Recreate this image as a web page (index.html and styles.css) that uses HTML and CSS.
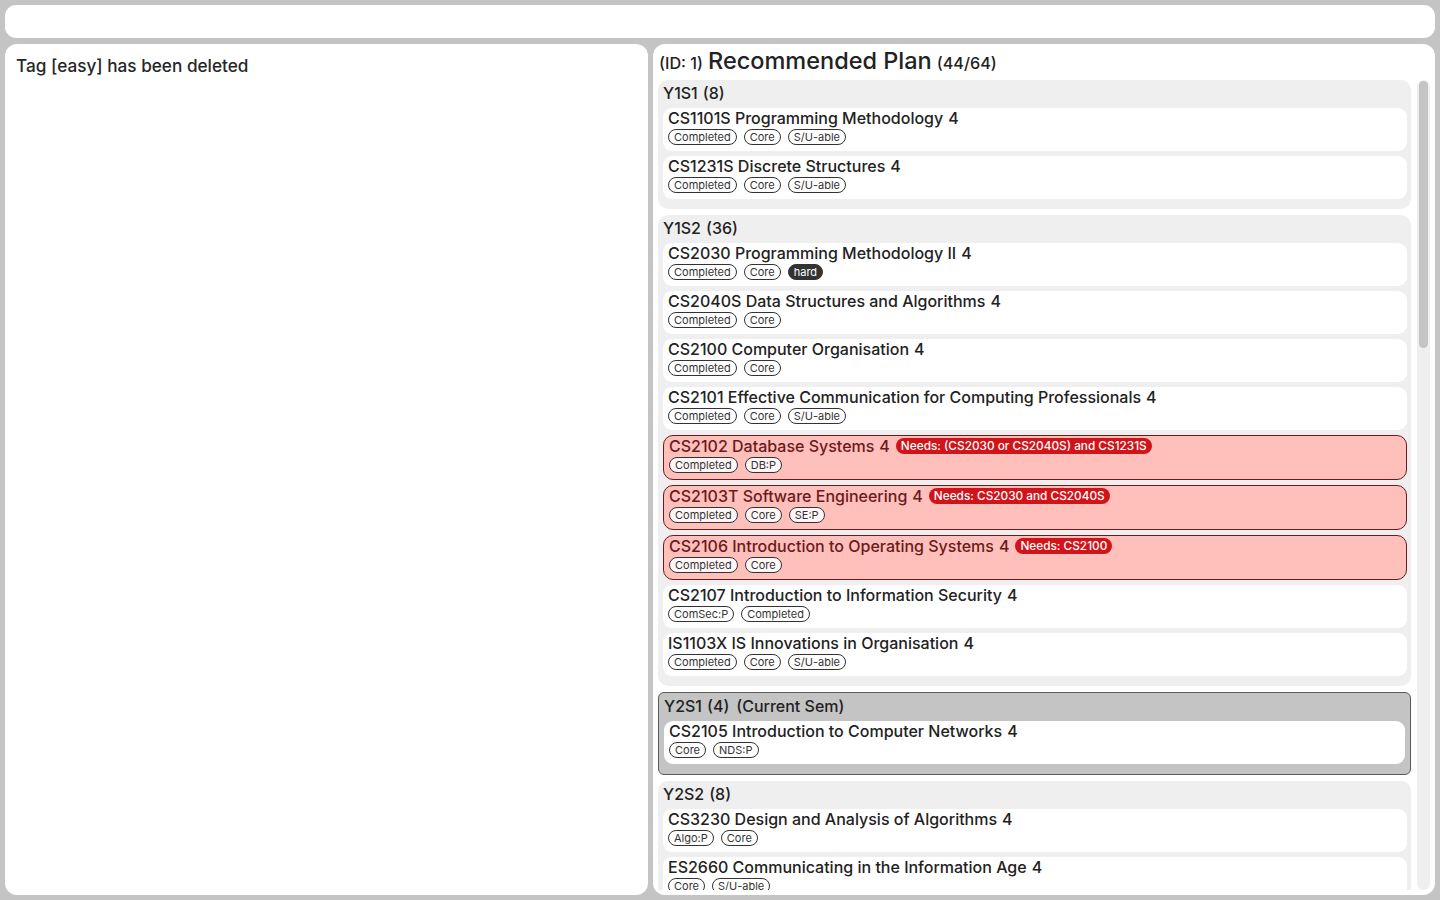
FILE: index.html
```html
<!DOCTYPE html>
<html lang="en">
<head>
<meta charset="utf-8">
<title>Plan</title>
<link rel="stylesheet" href="styles.css">
</head>
<body>
<div class="topbar"></div>
<div class="main">
  <section class="panel left">
    <p class="message">Tag [easy] has been deleted</p>
  </section>
  <section class="panel right">
    <header class="plan-head">
      <span class="small">(ID: 1)</span>
      <span class="big">Recommended Plan</span>
      <span class="small">(44/64)</span>
    </header>
    <div class="scroller">
      <div class="list">
        <div class="sem">
          <div class="sem-head"><span>Y1S1</span><span>(8)</span></div>
          <div class="mod">
            <div class="mod-title"><span>CS1101S Programming Methodology</span><span class="cr">4</span></div>
            <div class="tags"><span class="tag">Completed</span><span class="tag">Core</span><span class="tag">S/U-able</span></div>
          </div>
          <div class="mod">
            <div class="mod-title"><span>CS1231S Discrete Structures</span><span class="cr">4</span></div>
            <div class="tags"><span class="tag">Completed</span><span class="tag">Core</span><span class="tag">S/U-able</span></div>
          </div>
        </div>

        <div class="sem">
          <div class="sem-head"><span>Y1S2</span><span>(36)</span></div>
          <div class="mod">
            <div class="mod-title"><span>CS2030 Programming Methodology II</span><span class="cr">4</span></div>
            <div class="tags"><span class="tag">Completed</span><span class="tag">Core</span><span class="tag filled">hard</span></div>
          </div>
          <div class="mod">
            <div class="mod-title"><span>CS2040S Data Structures and Algorithms</span><span class="cr">4</span></div>
            <div class="tags"><span class="tag">Completed</span><span class="tag">Core</span></div>
          </div>
          <div class="mod">
            <div class="mod-title"><span>CS2100 Computer Organisation</span><span class="cr">4</span></div>
            <div class="tags"><span class="tag">Completed</span><span class="tag">Core</span></div>
          </div>
          <div class="mod">
            <div class="mod-title"><span>CS2101 Effective Communication for Computing Professionals</span><span class="cr">4</span></div>
            <div class="tags"><span class="tag">Completed</span><span class="tag">Core</span><span class="tag">S/U-able</span></div>
          </div>
          <div class="mod warn">
            <div class="mod-title"><span>CS2102 Database Systems</span><span class="cr">4</span><span class="needs">Needs: (CS2030 or CS2040S) and CS1231S</span></div>
            <div class="tags"><span class="tag">Completed</span><span class="tag">DB:P</span></div>
          </div>
          <div class="mod warn">
            <div class="mod-title"><span>CS2103T Software Engineering</span><span class="cr">4</span><span class="needs">Needs: CS2030 and CS2040S</span></div>
            <div class="tags"><span class="tag">Completed</span><span class="tag">Core</span><span class="tag">SE:P</span></div>
          </div>
          <div class="mod warn">
            <div class="mod-title"><span>CS2106 Introduction to Operating Systems</span><span class="cr">4</span><span class="needs">Needs: CS2100</span></div>
            <div class="tags"><span class="tag">Completed</span><span class="tag">Core</span></div>
          </div>
          <div class="mod">
            <div class="mod-title"><span>CS2107 Introduction to Information Security</span><span class="cr">4</span></div>
            <div class="tags"><span class="tag">ComSec:P</span><span class="tag">Completed</span></div>
          </div>
          <div class="mod">
            <div class="mod-title"><span>IS1103X IS Innovations in Organisation</span><span class="cr">4</span></div>
            <div class="tags"><span class="tag">Completed</span><span class="tag">Core</span><span class="tag">S/U-able</span></div>
          </div>
        </div>

        <div class="sem current">
          <div class="sem-head"><span>Y2S1</span><span>(4)</span><span class="cur">(Current Sem)</span></div>
          <div class="mod">
            <div class="mod-title"><span>CS2105 Introduction to Computer Networks</span><span class="cr">4</span></div>
            <div class="tags"><span class="tag">Core</span><span class="tag">NDS:P</span></div>
          </div>
        </div>

        <div class="sem">
          <div class="sem-head"><span>Y2S2</span><span>(8)</span></div>
          <div class="mod">
            <div class="mod-title"><span>CS3230 Design and Analysis of Algorithms</span><span class="cr">4</span></div>
            <div class="tags"><span class="tag">Algo:P</span><span class="tag">Core</span></div>
          </div>
          <div class="mod">
            <div class="mod-title"><span>ES2660 Communicating in the Information Age</span><span class="cr">4</span></div>
            <div class="tags"><span class="tag">Core</span><span class="tag">S/U-able</span></div>
          </div>
        </div>
      </div>
      <div class="track"><div class="thumb"></div></div>
    </div>
  </section>
</div>
</body>
</html>
```

FILE: styles.css
```css
* { box-sizing: border-box; }
html, body { height: 100%; }
body {
  margin: 0;
  padding: 5px;
  background: #c4c4c4;
  font-family: "Inter", "Liberation Sans", sans-serif;
  color: #222;
  display: flex;
  flex-direction: column;
  gap: 6px;
  overflow: hidden;
}
.topbar {
  height: 33px;
  background: #fff;
  border-radius: 11px;
  flex: none;
}
.main {
  flex: 1;
  min-height: 0;
  display: flex;
  gap: 5px;
}
.panel {
  background: #fff;
  border-radius: 12px;
  min-height: 0;
}
.left {
  width: 643px;
  flex: none;
  padding: 10px 11px;
}
.message {
  margin: 0;
  font-size: 17.2px;
  line-height: 24px;
  font-weight: 500;
  color: #262626;
}
.right {
  flex: 1;
  display: flex;
  flex-direction: column;
  padding: 0 5px 5px 5px;
}
.plan-head {
  height: 36px;
  display: flex;
  align-items: baseline;
  gap: 5px;
  padding: 2px 0 0 1px;
  flex: none;
}
.plan-head .small { font-size: 16.2px; font-weight: 500; }
.plan-head .big { font-size: 23.5px; line-height: 30px; font-weight: 500; }
.scroller {
  flex: 1;
  min-height: 0;
  display: flex;
  gap: 6px;
}
.list {
  flex: 1;
  overflow: hidden;
  display: flex;
  flex-direction: column;
  gap: 6px;
}
.sem {
  background: #efefef;
  border-radius: 10px;
  padding: 1px 4px 10px 5px;
  display: flex;
  flex-direction: column;
  gap: 5px;
  flex: none;
}
.sem-head {
  display: flex;
  gap: 5px;
  font-size: 16px;
  line-height: 25px;
  font-weight: 500;
  margin-bottom: -3px;
}
.sem-head .cur { margin-left: 2px; }
.sem.current {
  background: #c4c4c4;
  border: 1px solid #5a5a5a;
  border-radius: 6px;
  padding: 1px 5px 10px 5px;
}
.mod {
  background: #fff;
  border-radius: 9px;
  height: 43px;
  padding: 0 5px;
}
.mod-title {
  display: flex;
  align-items: center;
  gap: 5px;
  font-size: 16px;
  line-height: 20px;
  font-weight: 500;
  white-space: nowrap;
}
.mod.warn {
  background: #ffbfbb;
  border: 1px solid #6a1b1b;
  border-radius: 10px;
  height: 45px;
  color: #6b1a1a;
}
.needs {
  background: #d0141a;
  color: #fff;
  font-size: 11.8px;
  line-height: 16px;
  font-weight: 500;
  padding: 0 5px;
  border-radius: 8px;
  margin-left: 1px;
}
.tags {
  display: flex;
  gap: 7px;
  margin-top: 1px;
}
.tag {
  font-size: 11px;
  line-height: 14px;
  height: 16px;
  padding: 0 5px;
  border: 1px solid #333;
  border-radius: 8px;
  color: #333;
  background: #fff;
  font-weight: 400;
}
.warn .tag { background: #fff7f7; color: #333; }
.tag.filled {
  background: #333;
  color: #fff;
}
.track {
  width: 13px;
  flex: none;
  background: #efefef;
  border-radius: 7px;
  padding: 1px 2px;
}
.thumb {
  height: 267px;
  background: #c4c4c4;
  border-radius: 5px;
}
```
